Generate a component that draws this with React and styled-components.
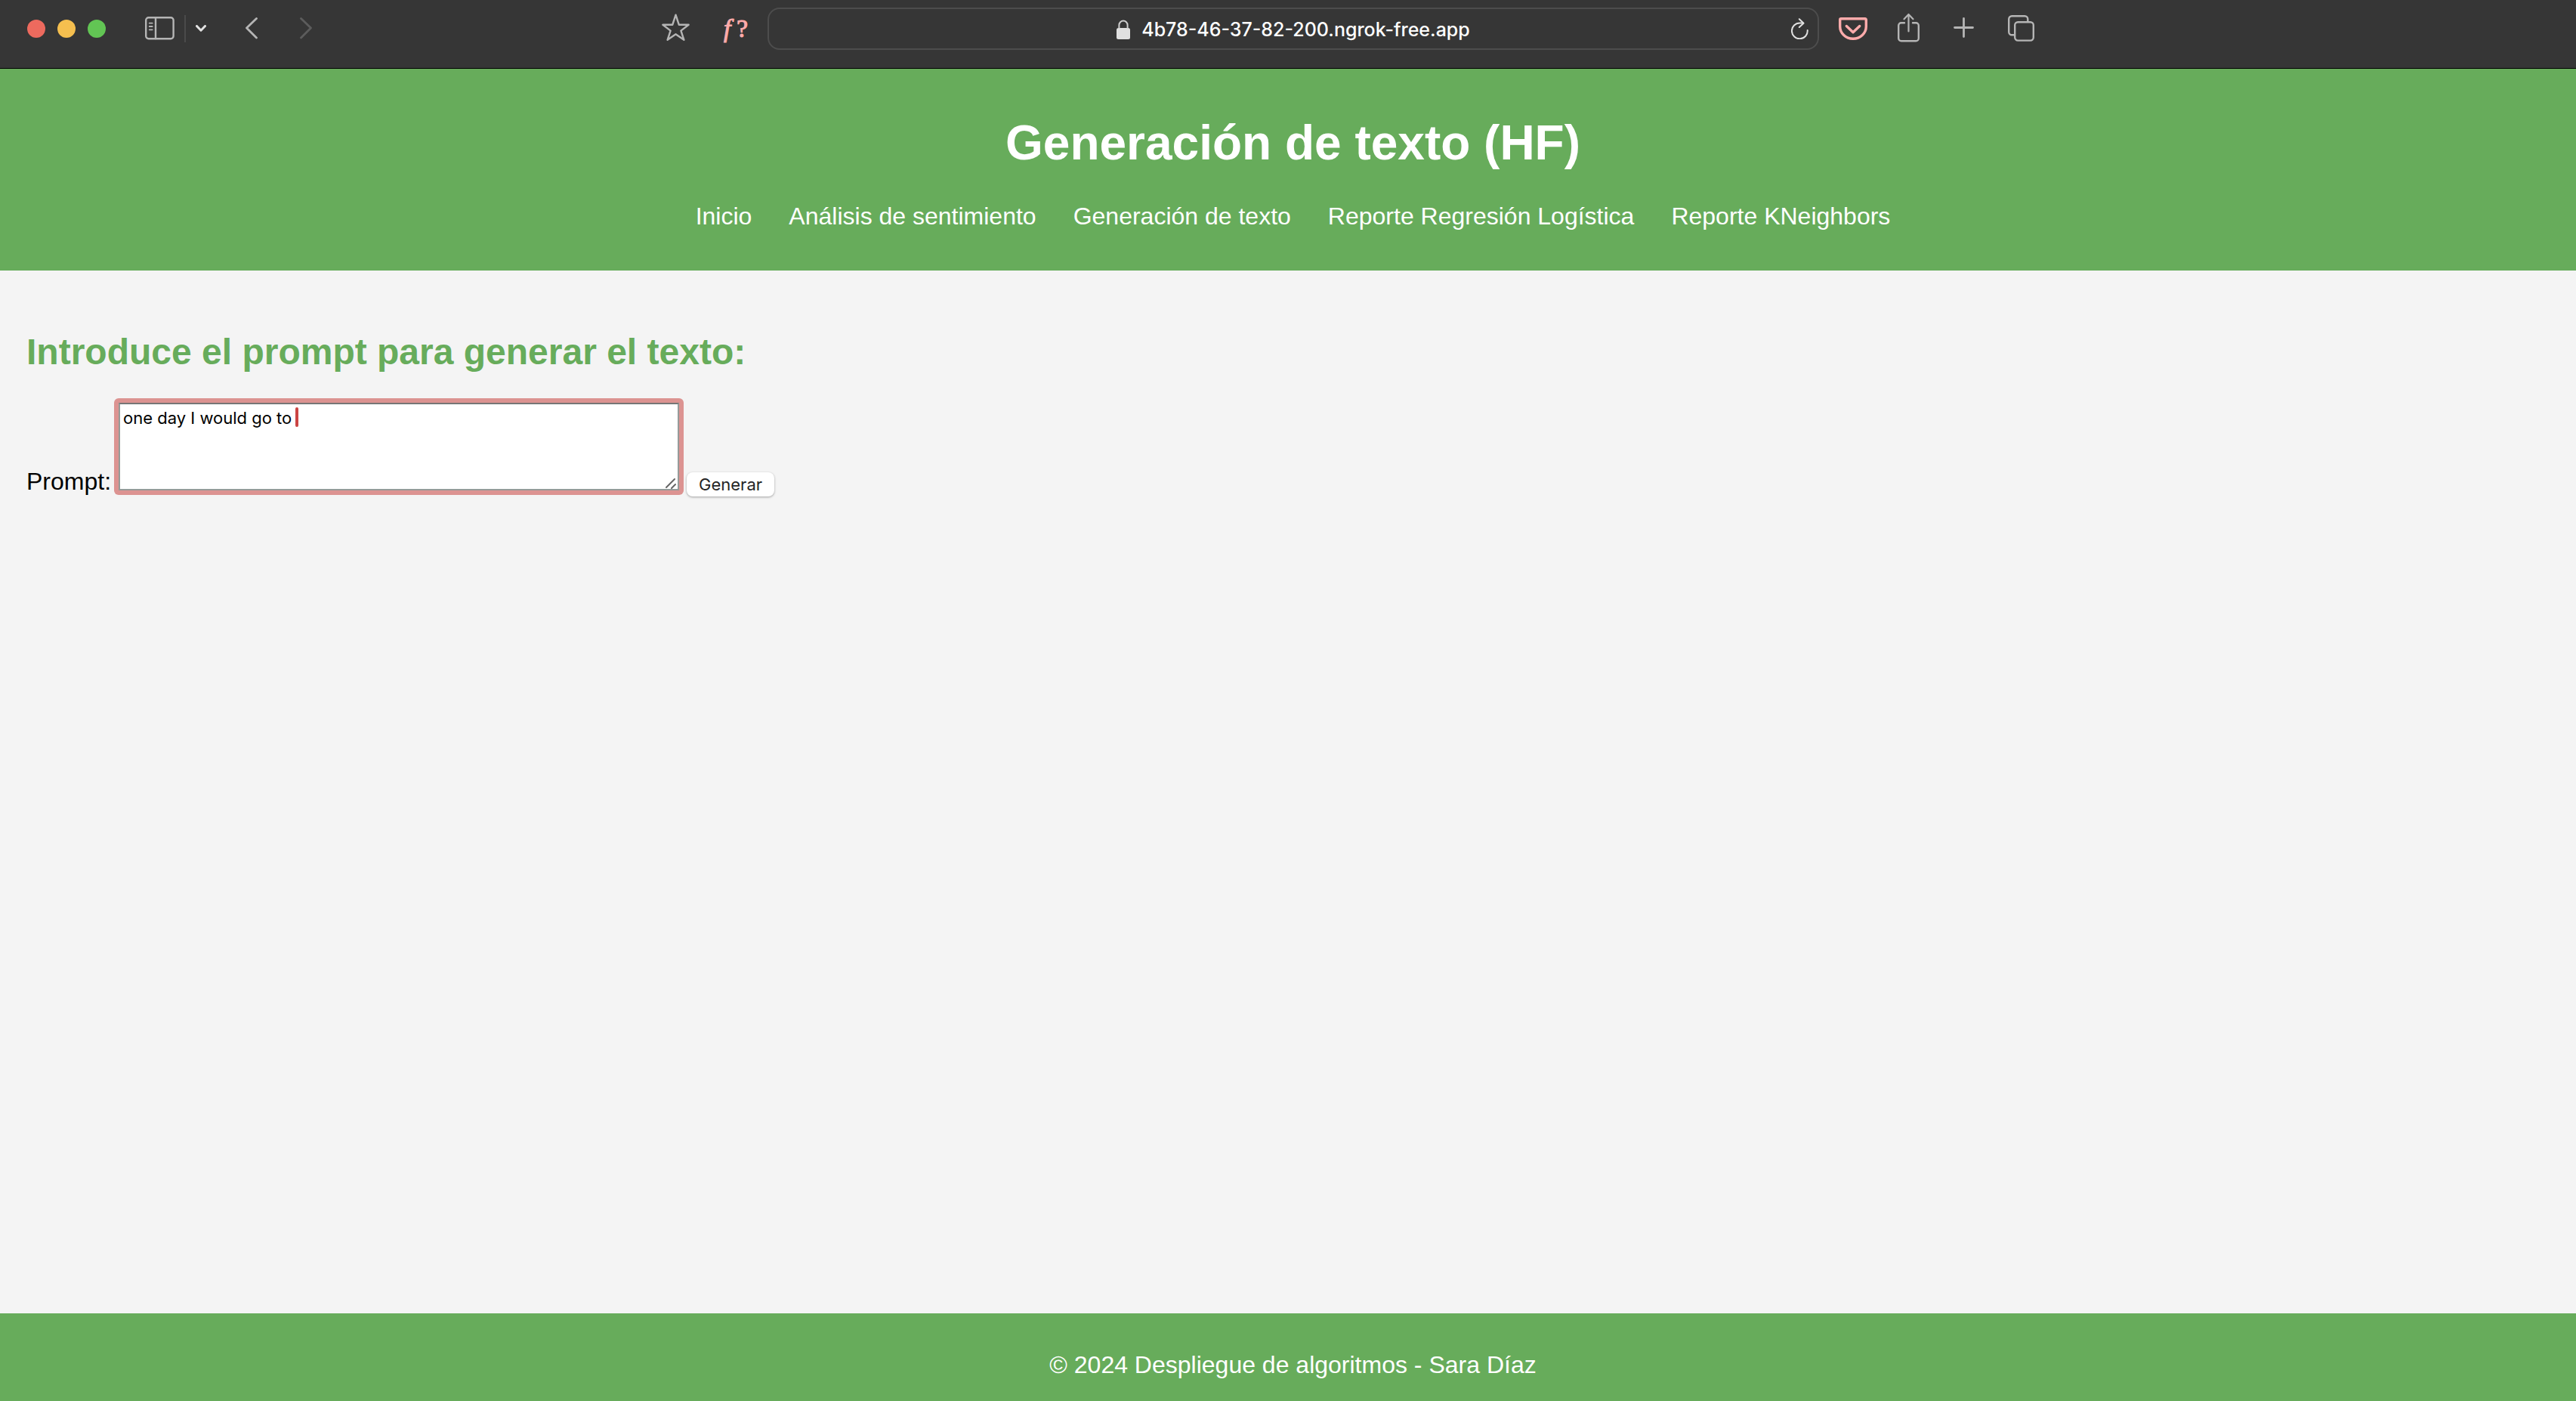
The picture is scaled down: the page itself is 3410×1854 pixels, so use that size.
import React from "react";
import styled, { createGlobalStyle } from "styled-components";

const green = "#67ac5b";
const ui = `Inter, Roboto, "Liberation Sans", sans-serif`;

const GlobalStyle = createGlobalStyle`
  *, *::before, *::after { box-sizing: border-box; }
  body {
    margin: 0;
    background: #f4f4f4;
    color: #000;
    font-family: "Liberation Sans", Arial, sans-serif;
    font-size: 32px;
    line-height: 36px;
  }
`;

const Page = styled.div`
  min-height: 100vh;
  display: flex;
  flex-direction: column;
`;

const Toolbar = styled.div`
  display: grid;
  grid-template-columns: 1fr minmax(0, 1392px) 1fr;
  align-items: center;
  height: 91px;
  padding: 0 0 14px 14px;
  background: #363636;
  border-bottom: 1px solid #000;
  color: #b5b5b5;
`;

const ToolGroup = styled.div`
  display: flex;
  align-items: center;
  gap: ${(p) => p.$gap || 0}px;
`;

const LeftTools = styled(ToolGroup)`
  justify-content: space-between;
  padding: 0 26px 0 22px;
`;

const RightTools = styled(ToolGroup)`
  padding-left: 26px;
`;

const Light = styled.button`
  width: 24px;
  height: 24px;
  padding: 0;
  border: 0;
  border-radius: 50%;
  background: ${(p) => p.$color};
`;

const ToolButton = styled.button`
  display: flex;
  align-items: center;
  padding: 0;
  border: 0;
  background: none;
  color: ${(p) => p.$color || "inherit"};
  svg {
    display: block;
    fill: none;
    stroke: currentColor;
    stroke-linecap: round;
    stroke-linejoin: round;
  }
`;

const Divider = styled.span`
  width: 2px;
  height: 36px;
  background: #4a4a4a;
`;

const FontTool = styled(ToolButton)`
  align-items: baseline;
  justify-content: space-between;
  width: 38px;
  padding-left: 6px;
  font: 34px/36px "Liberation Serif", serif;
  -webkit-text-stroke: 1px currentColor;
`;

const AddressBar = styled.div`
  display: grid;
  grid-template-columns: 1fr auto 1fr;
  align-items: center;
  height: 56px;
  padding: 0 12px;
  border: 2px solid #4d4d4d;
  border-radius: 16px;
`;

const Site = styled.div`
  grid-column: 2;
  display: flex;
  align-items: center;
  gap: 15px;
  padding-top: 2px;
  color: #fff;
  font: 500 25px/32px ${ui};
`;

const Reload = styled(ToolButton)`
  justify-self: end;
`;

const Header = styled.header`
  padding: 61px 0 54px 13px;
  background: ${green};
  color: #fff;
  text-align: center;
`;

const Title = styled.h1`
  margin: 0 0 42px;
  font-size: 64px;
  line-height: 74px;
`;

const Nav = styled.nav`
  display: flex;
  flex-wrap: wrap;
  justify-content: center;
  gap: 49px;
`;

const NavLink = styled.a`
  color: #fff;
  text-decoration: none;
`;

const Main = styled.main`
  flex: 1;
  padding: 80px 35px 40px;
`;

const Heading = styled.h2`
  margin: 0 0 34px;
  color: ${green};
  font-size: 48px;
  line-height: 55px;
`;

const PromptForm = styled.form`
  display: flex;
  align-items: flex-end;
  gap: 4px;
`;

const PromptLabel = styled.label`
  padding-bottom: 2px;
`;

const Field = styled.div`
  position: relative;
  margin-bottom: 2px;
  padding: 6px;
  border-radius: 6px;
  background: #dc9391;
`;

const PromptBox = styled.textarea`
  display: block;
  width: 742px;
  height: 116px;
  padding: 4px;
  border: 2px solid #959b99;
  border-top-color: #767676;
  border-radius: 0;
  outline: 0;
  background: #fff;
  color: #000;
  resize: none;
  font: 400 22px/28px ${ui};
`;

const Caret = styled.span`
  position: absolute;
  top: 12px;
  left: 240px;
  width: 4px;
  height: 26px;
  border-radius: 2px;
  background: #cb4544;
`;

const Grip = styled.svg`
  position: absolute;
  right: 10px;
  bottom: 8px;
  stroke: #666;
  stroke-width: 2;
  stroke-linecap: round;
`;

const Submit = styled.button`
  height: 32px;
  padding: 0 16px;
  border: 0;
  border-radius: 8px;
  background: #fff;
  box-shadow: 0 1px 3px rgba(0, 0, 0, 0.35);
  color: #262626;
  font: 400 22px/32px ${ui};
`;

const Footer = styled.footer`
  padding: 50px 0 30px 13px;
  background: ${green};
  color: #fff;
  text-align: center;
`;

const links = [
  "Inicio",
  "Análisis de sentimiento",
  "Generación de texto",
  "Reporte Regresión Logística",
  "Reporte KNeighbors",
];

function BrowserToolbar() {
  return (
    <Toolbar>
      <LeftTools>
        <ToolGroup $gap={52}>
          <ToolGroup $gap={16}>
            <Light $color="#ed6a5e" aria-label="Cerrar" />
            <Light $color="#f5bf4f" aria-label="Minimizar" />
            <Light $color="#62c554" aria-label="Maximizar" />
          </ToolGroup>
          <ToolGroup $gap={13}>
            <ToolButton aria-label="Barra lateral">
              <svg width="39" height="32" viewBox="0 0 39 32" strokeWidth="2.4">
                <rect x="1.2" y="1.2" width="36.4" height="28" rx="3.5" />
                <path d="M14 1.5V29" />
                <path d="M5.7 8.7h4M5.7 13h4M5.7 17.3h4" strokeWidth="1.8" />
              </svg>
            </ToolButton>
            <Divider />
            <ToolButton $color="#e3e3e3" aria-label="Grupos de pestañas">
              <svg width="14" height="10" viewBox="0 0 14 10" strokeWidth="3">
                <path d="M1.5 1.5 7 7.2l5.5-5.7" />
              </svg>
            </ToolButton>
          </ToolGroup>
          <ToolGroup $gap={56}>
            <ToolButton aria-label="Atrás">
              <svg width="16" height="30" viewBox="0 0 16 30" strokeWidth="2.8">
                <path d="M14.5 1.5 1.5 14l13 13" />
              </svg>
            </ToolButton>
            <ToolButton $color="#5c5c5c" aria-label="Adelante">
              <svg width="16" height="30" viewBox="0 0 16 30" strokeWidth="2.8">
                <path d="M1.5 1.5 14.5 14l-13 13" />
              </svg>
            </ToolButton>
          </ToolGroup>
        </ToolGroup>
        <ToolGroup $gap={39}>
          <ToolButton aria-label="Favoritos">
            <svg width="37" height="40" viewBox="0 0 37 40" strokeWidth="2.4">
              <path d="M18.5 1.7 22.8 14.8H35.6L25.4 22.6 29.4 34.8 18.5 27.3 7.6 34.8 11.6 22.6 1.4 14.8H14.2Z" />
            </svg>
          </ToolButton>
          <FontTool $color="#ffabab" aria-label="Identificar fuente">
            <em>f</em>
            <span>?</span>
          </FontTool>
        </ToolGroup>
      </LeftTools>
      <AddressBar>
        <Site>
          <svg width="18" height="26" viewBox="0 0 18 26">
            <rect y="11" width="18" height="15" rx="2.5" fill="#e0e0e0" />
            <path
              d="M3.4 12V7.2a5.6 5.6 0 0 1 11.2 0V12"
              fill="none"
              stroke="#cfcfcf"
              strokeWidth="2"
            />
          </svg>
          <span>4b78-46-37-82-200.ngrok-free.app</span>
        </Site>
        <Reload $color="#e0e0e0" aria-label="Recargar">
          <svg width="23" height="28" viewBox="0 0 23 28" strokeWidth="2">
            <path d="M21.7 16a10.4 10.4 0 1 1-10.2-9.5h4.5" />
            <path d="M10.8 1.2 16.5 6.8 10.8 12" />
          </svg>
        </Reload>
      </AddressBar>
      <RightTools>
        <ToolGroup $gap={40}>
          <ToolButton $color="#ffabab" aria-label="Pocket">
            <svg width="38" height="30" viewBox="0 0 38 30" strokeWidth="3.4">
              <path d="M3 1.7H35a1.3 1.3 0 0 1 1.3 1.3V12a17.3 16.3 0 0 1-34.6 0V3A1.3 1.3 0 0 1 3 1.7Z" />
              <path d="M10.3 11.5 19 19.7l8.7-8.2" />
            </svg>
          </ToolButton>
          <ToolGroup $gap={45}>
            <ToolButton aria-label="Compartir">
              <svg width="29" height="42" viewBox="0 0 29 42" strokeWidth="2.4">
                <path d="M9 13.2H4.7a3.5 3.5 0 0 0-3.5 3.5V33.8a3.5 3.5 0 0 0 3.5 3.5H24.3a3.5 3.5 0 0 0 3.5-3.5V16.7a3.5 3.5 0 0 0-3.5-3.5H20" />
                <path d="M14.5 24.5V2.5M8.5 8.3 14.5 2l6 6.3" strokeWidth="2.2" />
              </svg>
            </ToolButton>
            <ToolButton aria-label="Pestaña nueva">
              <svg width="27" height="30" viewBox="0 0 27 30" strokeWidth="2.8">
                <path d="M13.5 1.5V25.5M1.5 13.5H25.5" />
              </svg>
            </ToolButton>
            <ToolButton aria-label="Vista de pestañas">
              <svg width="35" height="37" viewBox="0 0 35 37" strokeWidth="2.4">
                <rect x="9.2" y="9.2" width="24.6" height="24.4" rx="4" />
                <path d="M8.5 26.3H5.2a4 4 0 0 1-4-4V5.2a4 4 0 0 1 4-4H22.3a4 4 0 0 1 4 4V8.5" />
              </svg>
            </ToolButton>
          </ToolGroup>
        </ToolGroup>
      </RightTools>
    </Toolbar>
  );
}

export default function App() {
  return (
    <Page>
      <GlobalStyle />
      <BrowserToolbar />
      <Header>
        <Title>Generación de texto (HF)</Title>
        <Nav>
          {links.map((label) => (
            <NavLink href="#" key={label}>
              {label}
            </NavLink>
          ))}
        </Nav>
      </Header>
      <Main>
        <Heading>Introduce el prompt para generar el texto:</Heading>
        <PromptForm onSubmit={(e) => e.preventDefault()}>
          <PromptLabel htmlFor="prompt">Prompt:</PromptLabel>
          <Field>
            <PromptBox id="prompt" defaultValue="one day I would go to " />
            <Caret />
            <Grip width="14" height="15" viewBox="0 0 14 15">
              <path d="M1 13 12 2M8 14l5-5" />
            </Grip>
          </Field>
          <Submit type="submit">Generar</Submit>
        </PromptForm>
      </Main>
      <Footer>© 2024 Despliegue de algoritmos - Sara Díaz</Footer>
    </Page>
  );
}
